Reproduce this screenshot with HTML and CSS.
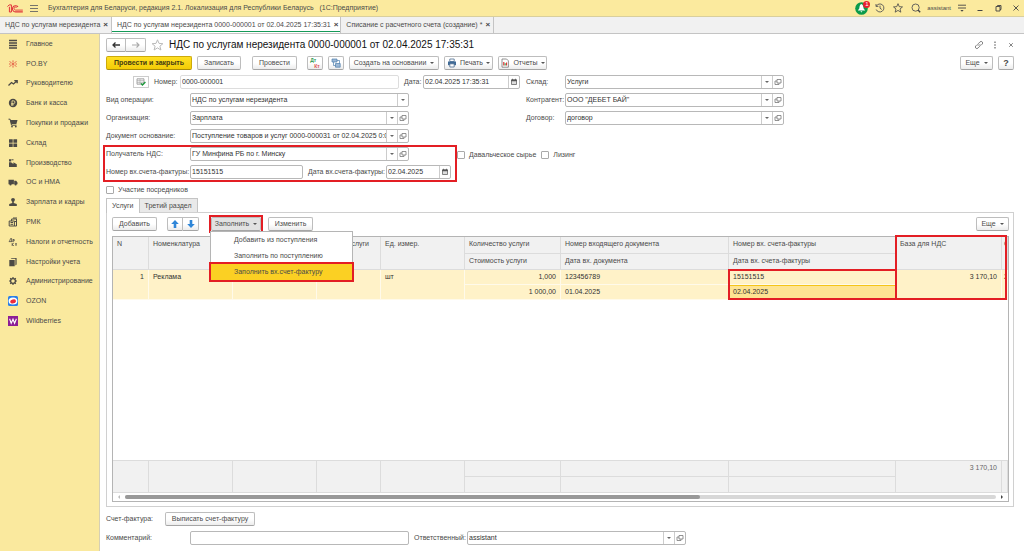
FILE: index.html
```html
<!DOCTYPE html>
<html lang="ru">
<head>
  <meta charset="UTF-8" />
  <meta name="viewport" content="width=device-width, initial-scale=1.0" />
  <title>НДС по услугам нерезидента</title>
  <link rel="stylesheet" href="styles.css">
</head>
<body>
  <svg class="sprite" aria-hidden="true">
    <symbol id="i-open" viewBox="0 0 8 8">
      <path d="M3 1.5h4v3.5h-4zM3 3H1v3.5h4V5" fill="none" stroke="#777" stroke-width="0.8"/>
    </symbol>
    <symbol id="i-cal" viewBox="0 0 8 8">
      <path d="M1.5 2h5v4.5h-5z" fill="#ddd" stroke="#666" stroke-width="0.8"/>
      <path d="M1.2 1.6h5.6v1.6H1.2zM2.2 0.8h0.8v1h-0.8zM5 0.8h0.8v1H5z" fill="#555"/>
    </symbol>
    <symbol id="i-star" viewBox="0 0 12 12">
      <path d="M6 0.8l1.5 3.6 3.9 0.3-3 2.5 1 3.8L6 8.9 2.6 11l1-3.8-3-2.5 3.9-0.3z" fill="none" stroke="currentColor"/>
    </symbol>
  </svg>

  <header class="titlebar">
    <svg class="logo" viewBox="0 0 16 9">
      <path d="M0.5 2.6L2.2 0.9H4.4V8H2.4V2.8" fill="none" stroke="#e0333a" stroke-width="1"/>
      <path d="M11 2.9A3.1 3.1 0 1 0 8.6 7.9H15.8" fill="none" stroke="#e0333a" stroke-width="1.1"/>
      <path d="M9.6 3.5A1.5 1.5 0 1 0 8.6 6.1H15.8" fill="none" stroke="#e0333a" stroke-width="0.9"/>
    </svg>
    <button class="icon-btn burger" aria-label="Меню">
      <svg viewBox="0 0 8 8"><path d="M0 1.5h8M0 4.5h8M0 7.5h8" stroke="#666" stroke-width="0.9"/></svg>
    </button>
    <span class="app-name">Бухгалтерия для Беларуси, редакция 2.1. Локализация для Республики Беларусь &nbsp; (1С:Предприятие)</span>
    <div class="title-tools">
      <button class="icon-btn bell" aria-label="Уведомления">
        <svg viewBox="0 0 14 14">
          <circle cx="6.5" cy="7.5" r="6.3" fill="#0c9b4a"/>
          <path d="M6.3 3C4.5 3.5 4.6 6 4.3 7.6L2.8 9.6h7.4L8.6 7.6C8.4 6 8.3 3.5 6.3 3zM5.4 10.3h2l-1 1.2z" fill="#fff"/>
        </svg>
        <span class="badge">1</span>
      </button>
      <button class="icon-btn" aria-label="История">
        <svg viewBox="0 0 10 10"><path d="M1.3 3.2A4 4 0 1 1 1.2 6.5M1 1v2.4h2.4M5 2.6v2.6l1.8 1.3" fill="none" stroke="#555" stroke-width="0.9"/></svg>
      </button>
      <button class="icon-btn" aria-label="Избранное"><svg viewBox="0 0 12 12"><use href="#i-star"/></svg></button>
      <button class="icon-btn" aria-label="Поиск">
        <svg viewBox="0 0 10 10"><circle cx="4.6" cy="4.6" r="3.6" fill="none" stroke="#555" stroke-width="0.9"/><path d="M7 7l2.2 2.2" stroke="#444" stroke-width="1.4"/></svg>
      </button>
      <span class="user">assistant</span>
      <button class="icon-btn" aria-label="Настройки">
        <svg viewBox="0 0 10 10"><path d="M1 2.2h8M1 5h8" stroke="#444" stroke-width="0.9"/><path d="M3.4 7h3.2L5 8.8z" fill="#444"/></svg>
      </button>
      <button class="icon-btn" aria-label="Свернуть"><svg viewBox="0 0 10 10"><path d="M2.5 7.5h5" stroke="#444"/></svg></button>
      <button class="icon-btn" aria-label="Развернуть"><svg viewBox="0 0 10 10"><path d="M3 3.5h4V8H3zM4.5 3.5V2.5h3.5v4H7" fill="none" stroke="#444" stroke-width="0.9"/></svg></button>
      <button class="icon-btn" aria-label="Закрыть"><svg viewBox="0 0 10 10"><path d="M2.5 2.5l5 5M7.5 2.5l-5 5" stroke="#444" stroke-width="0.9"/></svg></button>
    </div>
  </header>

  <nav class="tabs">
    <a href="#" class="tab">НДС по услугам нерезидента <b>×</b></a>
    <a href="#" class="tab active">НДС по услугам нерезидента 0000-000001 от 02.04.2025 17:35:31 <b>×</b></a>
    <a href="#" class="tab">Списание с расчетного счета (создание) * <b>×</b></a>
  </nav>

  <div class="layout">
    <nav class="sidebar">
      <div class="sections">
        <a href="#"><svg viewBox="0 0 10 10"><path d="M1 1.5h8M1 4h8M1 6.5h8M1 9h8" stroke="#4c4a45" stroke-width="1.3"/></svg>Главное</a>
        <a href="#"><svg viewBox="0 0 10 10"><path d="M5 3.6V1.4M5 6.4V8.6M3.8 4.4L1.6 2.2M6.2 4.4L8.4 2.2M3.8 5.6L1.6 7.8M6.2 5.6L8.4 7.8M1 5h1.6M7.4 5H9" fill="none" stroke="#e2503c" stroke-width="0.9"/><circle cx="5" cy="5" r="1" fill="#e2503c"/></svg>PO.BY</a>
        <a href="#"><svg viewBox="0 0 10 10"><path d="M0.5 7.5L3.5 4.5 5.5 6 9 2.8M6.3 2.6H9.2V5.2" fill="none" stroke="#4c4a45" stroke-width="1.3"/></svg>Руководителю</a>
        <a href="#"><svg viewBox="0 0 10 10"><circle cx="5" cy="5" r="4.2" fill="#4c4a45"/><path d="M4 8V2.8h1.5a1.4 1.4 0 0 1 0 2.8H3.2M3.2 6.8h2.6" fill="none" stroke="#fae99e" stroke-width="0.8"/></svg>Банк и касса</a>
        <a href="#"><svg viewBox="0 0 10 10"><path d="M0.5 1.2h1.6L3.5 7.2h5" fill="none" stroke="#4c4a45"/><path d="M2.2 2h7.3L8.4 6H3.2z" fill="#4c4a45"/><circle cx="4" cy="8.6" r="0.9" fill="#4c4a45"/><circle cx="7.8" cy="8.6" r="0.9" fill="#4c4a45"/></svg>Покупки и продажи</a>
        <a href="#"><svg viewBox="0 0 10 10"><path d="M1 1.2h3.7v3.5H1zM5.4 1.2h3.7v3.5H5.4zM1 5.4h3.7v3.5H1zM5.4 5.4h3.7v3.5H5.4z" fill="#4c4a45"/></svg>Склад</a>
        <a href="#"><svg viewBox="0 0 10 10"><path d="M1 9V4.2h2L5.4 6V4.3L8.8 6.2V9zM1 1.2h2.2v2.3H1z" fill="#4c4a45"/><path d="M3.5 1.8h2" stroke="#4c4a45"/></svg>Производство</a>
        <a href="#"><svg viewBox="0 0 10 10"><path d="M0.5 2.8h5.4v4.4H0.5zM6.2 3.8h2l1.3 1.6v1.8H6.2z" fill="#4c4a45"/><circle cx="2.5" cy="7.4" r="1.1" fill="#4c4a45"/><circle cx="7.6" cy="7.4" r="1.1" fill="#4c4a45"/></svg>ОС и НМА</a>
        <a href="#"><svg viewBox="0 0 10 10"><circle cx="5" cy="2.8" r="1.9" fill="#4c4a45"/><path d="M4.2 4h1.6v2l3 1V9H1.2V7l3-1z" fill="#4c4a45"/></svg>Зарплата и кадры</a>
        <a href="#"><svg viewBox="0 0 10 10"><path d="M1.2 4h5.2v5H1.2zM3.6 4V2h4.9v7H6.4" fill="none" stroke="#4c4a45"/><path d="M2.5 5.5h2.6M2.5 7.3h2.6M5 1h4M7 4.5h1" stroke="#4c4a45"/></svg>РМК</a>
        <a href="#"><svg viewBox="0 0 10 10"><path d="M0.8 4.6h3.6M1.5 4.4L2.6 1.5h1v3M5 2.2V5M5 2.5h1.2v1.4H5" fill="none" stroke="#4c4a45" stroke-width="0.8"/><path d="M4.2 6v3M5.8 6L4.4 7.4 5.8 9M7 6.8h2M8 6.8V9" fill="none" stroke="#4c4a45" stroke-width="0.8"/></svg>Налоги и отчетность</a>
        <a href="#"><svg viewBox="0 0 10 10"><path d="M1.3 3h5.4v6.2H1.3zM2.6 1.8L3.6 0.9h5v6.5L7.4 8.4V1.8z" fill="#4c4a45"/></svg>Настройки учета</a>
        <a href="#"><svg viewBox="0 0 10 10"><circle cx="5" cy="5" r="2.4" fill="none" stroke="#4c4a45" stroke-width="1.3"/><path d="M5 1v1.5M5 7.5V9M1 5h1.5M7.5 5H9M2.2 2.2l1 1M6.8 6.8l1 1M7.8 2.2l-1 1M3.2 6.8l-1 1" stroke="#4c4a45" stroke-width="1.2"/></svg>Администрирование</a>
        <a href="#"><svg viewBox="0 0 10 10"><rect width="10" height="10" rx="1.5" fill="#2a7fe8"/><ellipse cx="5" cy="5" rx="4.4" ry="3.6" fill="#fff"/><ellipse cx="5" cy="5.4" rx="2.9" ry="1.9" fill="#ee2a3c" transform="rotate(-15 5 5)"/></svg>OZON</a>
        <a href="#"><svg viewBox="0 0 10 10"><rect width="10" height="10" fill="#8c1d96"/><path d="M1.6 2.8l1.6 4.4L5 3.2l1.6 4L8.4 2.8" fill="none" stroke="#fff" stroke-width="1.1"/></svg>Wildberries</a>
      </div>
    </nav>

    <main class="main">
      <div class="heading">
        <div class="btn-group">
          <button class="btn" aria-label="Назад"><svg viewBox="0 0 10 8"><path d="M9 4H2M4.5 1.5L2 4l2.5 2.5" fill="none" stroke="#333" stroke-width="1.3"/></svg></button>
          <button class="btn" aria-label="Вперед"><svg viewBox="0 0 10 8"><path d="M1 4h7M5.5 1.5L8 4 5.5 6.5" fill="none" stroke="#aaa" stroke-width="1.1"/></svg></button>
        </div>
        <svg class="fav" viewBox="0 0 12 12"><use href="#i-star"/></svg>
        <h1>НДС по услугам нерезидента 0000-000001 от 02.04.2025 17:35:31</h1>
        <div class="heading-tools">
          <button class="icon-btn" aria-label="Ссылка"><svg viewBox="0 0 10 10"><path d="M4.2 5.8A1.6 1.6 0 0 1 4.2 3.8l1.8-1.9a1.5 1.5 0 0 1 2.2 2.2L7 5.3M5.8 4.2a1.6 1.6 0 0 1 0 2L4 8.1A1.5 1.5 0 0 1 1.8 5.9L3 4.7" fill="none" stroke="#777" stroke-width="0.9"/></svg></button>
          <button class="icon-btn" aria-label="Действия"><svg viewBox="0 0 10 10"><path d="M4.4 1.5h1.2V3H4.4zM4.4 4.3h1.2v1.5H4.4zM4.4 7h1.2v1.5H4.4z" fill="#666"/></svg></button>
          <button class="icon-btn" aria-label="Закрыть"><svg viewBox="0 0 10 10"><path d="M3.2 3.2l3.6 3.6M6.8 3.2L3.2 6.8" stroke="#777" stroke-width="0.9"/></svg></button>
        </div>
      </div>

      <div class="toolbar">
        <button class="btn primary">Провести и закрыть</button>
        <button class="btn save">Записать</button>
        <button class="btn post">Провести</button>
        <button class="btn square dtkt" aria-label="Дт Кт"><span class="dt">Дт</span><span class="kt">Кт</span></button>
        <button class="btn square" aria-label="Структура">
          <svg viewBox="0 0 10 10"><path d="M1 1h5v3H1zM4.5 5.5h4.7v3.7H4.5z" fill="#9db9d6" stroke="#4f7fae" stroke-width="0.7"/><path d="M6 2.5h2.5v3M2.5 4v3.5h2" fill="none" stroke="#4f7fae" stroke-width="0.7"/></svg>
        </button>
        <button class="btn create">Создать на основании <i class="caret"></i></button>
        <button class="btn print">
          <svg viewBox="0 0 10 10"><path d="M2.8 1h4.4v2.5H2.8z" fill="#fff" stroke="#4b6c8f" stroke-width="0.8"/><path d="M1 3.5h8v3.7H1z" fill="#3f6a96"/><path d="M2.8 5.8h4.4V9H2.8z" fill="#fff" stroke="#4b6c8f" stroke-width="0.8"/></svg>
          Печать <i class="caret"></i></button>
        <button class="btn report">
          <svg viewBox="0 0 10 10"><path d="M2 1h4.6L8.4 2.8V9.2H2z" fill="#fff" stroke="#777" stroke-width="0.8"/><path d="M3.2 4h1.2v3.5H3.2z" fill="#d33"/><path d="M4.6 5.2h1.1v2.3H4.6z" fill="#2a9a4a"/><path d="M6 4.4h1.1v3.1H6z" fill="#d33"/></svg>
          Отчеты <i class="caret"></i></button>
        <button class="btn more">Еще <i class="caret"></i></button>
        <button class="btn square help">?</button>
      </div>

      <form class="form">
        <div class="row">
          <div class="left number-row">
            <button type="button" class="status" aria-label="Проведен">
              <svg viewBox="0 0 10 8"><path d="M1 0.8h7v5.4H1z" fill="#f4f4f4" stroke="#888" stroke-width="0.7"/><path d="M1 2.6h7M1 4.4h7M4 1v5" stroke="#999" stroke-width="0.5"/><path d="M5 5.4l1.4 1.6L9.4 4" fill="none" stroke="#1f9a3e" stroke-width="1.4"/></svg>
            </button>
            <label class="num-label" for="num">Номер:</label>
            <span class="field pale wide"><input id="num" value="0000-000001"></span>
            <label class="date-label" for="date">Дата:</label>
            <span class="field date"><input id="date" value="02.04.2025 17:35:31"><button type="button" aria-label="Календарь"><svg viewBox="0 0 8 8"><use href="#i-cal"/></svg></button></span>
          </div>
          <label class="short" for="store">Склад:</label>
          <span class="field wide"><select id="store"><option>Услуги</option></select><i class="drop"></i><button type="button" aria-label="Открыть"><svg viewBox="0 0 8 8"><use href="#i-open"/></svg></button></span>
        </div>
        <div class="row">
          <div class="left">
            <label class="long" for="kind">Вид операции:</label>
            <span class="field wide"><select id="kind"><option>НДС по услугам нерезидента</option></select><i class="drop"></i></span>
          </div>
          <label class="short" for="partner">Контрагент:</label>
          <span class="field wide"><select id="partner"><option>ООО "ДЕБЕТ БАЙ"</option></select><i class="drop"></i><button type="button" aria-label="Открыть"><svg viewBox="0 0 8 8"><use href="#i-open"/></svg></button></span>
        </div>
        <div class="row">
          <div class="left">
            <label class="long" for="org">Организация:</label>
            <span class="field wide"><select id="org"><option>Зарплата</option></select><i class="drop"></i><button type="button" aria-label="Открыть"><svg viewBox="0 0 8 8"><use href="#i-open"/></svg></button></span>
          </div>
          <label class="short" for="contract">Договор:</label>
          <span class="field wide"><select id="contract"><option>договор</option></select><i class="drop"></i><button type="button" aria-label="Открыть"><svg viewBox="0 0 8 8"><use href="#i-open"/></svg></button></span>
        </div>
        <div class="row">
          <label class="long" for="base">Документ основание:</label>
          <span class="field wide"><select id="base"><option>Поступление товаров и услуг 0000-000031 от 02.04.2025 0:00:00</option></select><i class="drop"></i><button type="button" aria-label="Открыть"><svg viewBox="0 0 8 8"><use href="#i-open"/></svg></button></span>
        </div>
        <div class="vat-rows">
          <div class="marked">
            <div class="row">
              <label class="long" for="recipient">Получатель НДС:</label>
              <span class="field wide"><select id="recipient"><option>ГУ Минфина РБ по г. Минску</option></select><i class="drop"></i><button type="button" aria-label="Открыть"><svg viewBox="0 0 8 8"><use href="#i-open"/></svg></button></span>
            </div>
            <div class="row">
              <label class="long" for="innum">Номер вх.счета-фактуры:</label>
              <span class="field invoice-num"><input id="innum" value="15151515"></span>
              <label class="invoice-label" for="indate">Дата вх.счета-фактуры:</label>
              <span class="field invoice-date"><input id="indate" value="02.04.2025"><button type="button" aria-label="Календарь"><svg viewBox="0 0 8 8"><use href="#i-cal"/></svg></button></span>
            </div>
          </div>
          <label class="check"><input type="checkbox">Давальческое сырье</label>
          <label class="check"><input type="checkbox">Лизинг</label>
        </div>
        <label class="check"><input type="checkbox">Участие посредников</label>
      </form>

      <div class="page-tabs">
        <button class="page-tab current">Услуги</button>
        <button class="page-tab">Третий раздел</button>
      </div>
      <section class="panel">
        <div class="toolbar">
          <button class="btn add">Добавить</button>
          <div class="btn-group arrows">
            <button class="btn" aria-label="Вверх"><svg viewBox="0 0 10 10"><path d="M5 1l3.8 4H6.3v4H3.7V5H1.2z" fill="#2f86d8"/></svg></button>
            <button class="btn" aria-label="Вниз"><svg viewBox="0 0 10 10"><path d="M5 9l3.8-4H6.3V1H3.7v4H1.2z" fill="#2f86d8"/></svg></button>
          </div>
          <div class="fill">
            <button class="btn pressed">Заполнить <i class="caret"></i></button>
            <div class="menu">
              <button>Добавить из поступления</button>
              <button>Заполнить по поступлению</button>
              <button class="chosen">Заполнить вх.счет-фактуру</button>
            </div>
          </div>
          <button class="btn change">Изменить</button>
          <button class="btn more">Еще <i class="caret"></i></button>
        </div>

        <div class="grid">
          <table>
            <colgroup><col class="c-n"><col class="c-name"><col class="c-name"><col class="c-sum"><col class="c-unit"><col class="c-qty"><col><col class="c-inv"><col class="c-vat"><col class="c-tail"></colgroup>
            <thead>
              <tr><th rowspan="2">N</th><th rowspan="2">Номенклатура</th><th rowspan="2"></th><th rowspan="2" class="right">услуги</th><th rowspan="2">Ед. измер.</th><th>Количество услуги</th><th>Номер входящего документа</th><th>Номер вх. счета-фактуры</th><th rowspan="2">База для НДС</th><th rowspan="2" class="tail">С</th></tr>
              <tr><th>Стоимость услуги</th><th>Дата вх. документа</th><th>Дата вх. счета-фактуры</th></tr>
            </thead>
            <tbody>
              <tr><td rowspan="2" class="num">1</td><td rowspan="2">Реклама</td><td rowspan="2"></td><td rowspan="2"></td><td rowspan="2">шт</td><td class="num">1,000</td><td>123456789</td><td>15151515</td><td rowspan="2" class="num">3 170,10</td><td rowspan="2" class="tail">2</td></tr>
              <tr><td class="num">1 000,00</td><td>01.04.2025</td><td class="cell-active">02.04.2025</td></tr>
            </tbody>
          </table>
          <table class="totals">
            <colgroup><col class="c-n"><col class="c-name"><col class="c-name"><col class="c-sum"><col class="c-unit"><col class="c-qty"><col><col class="c-inv"><col class="c-vat"><col class="c-tail"></colgroup>
            <tbody>
              <tr><td rowspan="2"></td><td rowspan="2"></td><td rowspan="2"></td><td rowspan="2"></td><td rowspan="2"></td><td></td><td></td><td></td><td rowspan="2" class="num">3 170,10</td><td rowspan="2"></td></tr>
              <tr><td></td><td></td><td></td></tr>
            </tbody>
          </table>
          <div class="scroll">
            <i class="to-left"></i>
            <div class="track"><div class="thumb"></div></div>
            <i class="to-right"></i>
          </div>
          <div class="mark mark-invoice"></div>
          <div class="mark mark-vat"></div>
        </div>
      </section>

      <div class="bottom">
        <div class="row">
          <span class="bill-label">Счет-фактура:</span>
          <button class="btn bill">Выписать счет-фактуру</button>
        </div>
        <div class="row">
          <label class="long" for="comment">Комментарий:</label>
          <span class="field wide"><input id="comment"></span>
          <label class="owner-label" for="owner">Ответственный:</label>
          <span class="field wide"><select id="owner"><option>assistant</option></select><i class="drop"></i><button type="button" aria-label="Открыть"><svg viewBox="0 0 8 8"><use href="#i-open"/></svg></button></span>
        </div>
      </div>
    </main>
  </div>
</body>
</html>
```
FILE: styles.css
```css
* {
  box-sizing: border-box;
}
body {
  margin: 0;
  min-height: 100vh;
  display: flex;
  flex-direction: column;
  font-family: "Liberation Sans", Arial, sans-serif;
  font-size: 7px;
  line-height: 10px;
  color: #4a4a4a;
  background: #fff;
}
button, input, select {
  font: inherit;
  color: inherit;
  margin: 0;
  padding: 0;
  border: none;
  background: none;
}
a {
  color: inherit;
  text-decoration: none;
}
svg {
  display: block;
  flex: none;
}
.sprite {
  position: absolute;
  width: 0;
  height: 0;
}

/* window title */
.titlebar {
  display: flex;
  align-items: center;
  height: 17px;
  padding: 0 3px 0 7px;
  background: #fbea9e;
  border-bottom: 1px solid #d9cf9d;
}
.logo {
  width: 16px;
  height: 9px;
}
.icon-btn {
  width: 18px;
  height: 14px;
  display: flex;
  align-items: center;
  justify-content: center;
}
.icon-btn svg {
  width: 10px;
  height: 10px;
}
.burger {
  width: 8px;
  margin: 0 10px 0 7px;
}
.burger svg {
  width: 8px;
  height: 8px;
}
.title-tools {
  display: flex;
  align-items: center;
  margin-left: auto;
  margin-right: -4px;
}
.bell {
  position: relative;
}
.bell svg {
  width: 14px;
  height: 14px;
}
.badge {
  position: absolute;
  top: 0;
  right: 1px;
  width: 7px;
  height: 7px;
  border-radius: 50%;
  background: #e8202e;
  color: #fff;
  font-size: 6px;
  line-height: 7px;
}
.user {
  font-size: 6px;
  margin: 0 2px;
}

.tabs {
  display: flex;
  height: 17px;
  background: #f1f1f1;
  border-bottom: 1px solid #c4c4c4;
}
.tab {
  display: flex;
  align-items: center;
  gap: 3px;
  padding: 0 3px 0 5px;
  border-right: 1px solid #c4c4c4;
}
.tab b {
  font-size: 8px;
  color: #444;
}
.tab.active {
  padding-right: 2px;
  background: #fff;
  box-shadow: inset 0 -1px #fff, inset 0 -2px #159a58;
}

.layout {
  flex: 1;
  display: flex;
}
.sidebar {
  width: 100px;
  flex: none;
  background: #fae99e;
  border-right: 1px solid #d5cfb4;
}
.sections {
  display: flex;
  flex-direction: column;
  min-height: 297px;
}
.sidebar a {
  flex: 1;
  display: flex;
  align-items: center;
  gap: 8px;
  padding-left: 8px;
  white-space: nowrap;
}
.sidebar svg {
  width: 10px;
  height: 10px;
}

.main {
  flex: 1;
  min-width: 0;
  padding: 0 10px 6px 6px;
  display: flex;
  flex-direction: column;
}
.heading {
  display: flex;
  align-items: center;
  height: 21px;
}
.heading h1 {
  margin: 0 0 0 5px;
  font-size: 10px;
  line-height: 14px;
  font-weight: normal;
  color: #111;
}
.fav {
  width: 13px;
  height: 12px;
  margin-left: 5px;
  color: #bbb;
}
.heading-tools {
  display: flex;
  gap: 0;
  margin-left: auto;
  margin-right: -5px;
}
.heading-tools .icon-btn {
  width: 16px;
}

/* buttons */
.btn {
  display: flex;
  align-items: center;
  justify-content: center;
  gap: 4px;
  height: 14px;
  border: 1px solid #bdbdbd;
  border-bottom-color: #a5a5a5;
  border-radius: 2px;
  background: linear-gradient(#fff 50%, #ececec);
  white-space: nowrap;
}
.btn svg {
  width: 10px;
  height: 10px;
}
.btn-group {
  display: flex;
}
.btn-group .btn {
  width: 20px;
  border-radius: 2px 0 0 2px;
}
.btn-group .btn + .btn {
  border-left: none;
  border-radius: 0 2px 2px 0;
}
.caret {
  border: 2px solid transparent;
  border-top-color: #555;
  border-bottom: none;
}
.toolbar {
  display: flex;
  gap: 5px;
  height: 14px;
  margin-top: 1px;
}
.primary {
  width: 86px;
  font-weight: bold;
  color: #453c12;
  border-color: #cdaa0a;
  border-bottom-color: #a98c08;
  background: linear-gradient(#ffe023, #f3cc06);
}
.save {
  width: 44px;
}
.post {
  width: 45px;
  margin: 0 5px 0 6px;
}
.square {
  width: 16px;
}
.dtkt {
  display: grid;
  gap: 0;
  font-size: 5px;
  line-height: 5px;
  font-weight: bold;
}
.dt {
  color: #2f9a55;
  text-align: left;
}
.kt {
  color: #e05252;
  padding-left: 4px;
}
.create {
  width: 90px;
}
.print, .report {
  width: 49px;
  gap: 3px;
}
.more {
  width: 33px;
  margin-left: auto;
}
.help {
  font-size: 9px;
  font-weight: bold;
}

/* document fields */
.form {
  display: flex;
  flex-direction: column;
  align-items: flex-start;
  gap: 4px;
  margin-top: 5px;
}
.row {
  display: flex;
  align-items: center;
  height: 14px;
  white-space: nowrap;
}
.left {
  display: flex;
  align-items: center;
  width: 414px;
  margin-right: 6px;
}
.number-row {
  padding-left: 27px;
}
.long {
  width: 84px;
}
.short {
  width: 39px;
}
.num-label {
  width: 31px;
  padding-left: 5px;
}
.date-label {
  width: 24px;
  padding-left: 5px;
}
.status {
  width: 16px;
  height: 12px;
  display: flex;
  align-items: center;
  justify-content: center;
  border: 1px solid #ccc;
}
.status svg {
  width: 10px;
  height: 8px;
}
.field {
  display: flex;
  height: 14px;
  border: 1px solid #b8b8b8;
  border-radius: 2px;
  background: #fff;
  overflow: hidden;
}
.field input, .field select {
  flex: 1;
  min-width: 0;
  padding-left: 1px;
  appearance: none;
  outline: none;
  color: #333;
}
.field button, .drop {
  width: 11px;
  flex: none;
  display: flex;
  align-items: center;
  justify-content: center;
  border-left: 1px solid #ccc;
}
.drop::before {
  content: "";
  border: 2px solid transparent;
  border-top-color: #666;
  border-bottom: none;
}
.field svg {
  width: 8px;
  height: 8px;
}
.wide {
  width: 219px;
}
.pale {
  border-color: #ddd;
}
.date {
  width: 97px;
}
.vat-rows {
  display: flex;
  align-items: flex-start;
  margin: -2px 0 -2px -3px;
}
.marked {
  display: flex;
  flex-direction: column;
  gap: 4px;
  width: 354px;
  padding: 0 0 1px 1px;
  border: 2px solid #e31e24;
}
.invoice-num {
  width: 113px;
}
.invoice-label {
  width: 83px;
  padding-left: 5px;
}
.invoice-date {
  width: 65px;
}
.check {
  display: flex;
  align-items: center;
  gap: 4px;
  height: 11px;
}
.vat-rows .check {
  margin: 4px 5px 0 0;
}
.check input {
  appearance: none;
  width: 8px;
  height: 8px;
  border: 1px solid #aaa;
  border-radius: 1px;
  background: #fff;
}

/* pages */
.page-tabs {
  display: flex;
  margin-top: 3px;
}
.page-tab {
  height: 14px;
  padding: 0 5px;
  border: 1px solid #c4c4c4;
  border-bottom: none;
  background: #e9e9e9;
}
.page-tab + .page-tab {
  border-left: none;
}
.page-tab.current {
  height: 15px;
  margin-bottom: -1px;
  background: #fff;
  z-index: 1;
}
.panel {
  flex: 1;
  display: flex;
  flex-direction: column;
  padding: 4px 4px 4px 5px;
  border: 1px solid #d0d0d0;
}
.panel .toolbar {
  margin: 0;
}
.add {
  width: 45px;
}
.arrows {
  margin: 0 7px 0 5px;
}
.arrows .btn {
  width: 16px;
}
.fill {
  position: relative;
  margin-right: 2px;
  outline: 2px solid #e31e24;
}
.pressed {
  width: 50px;
  background: #e2e2e2;
}
.change {
  width: 45px;
}
.menu {
  position: absolute;
  top: 14px;
  left: -1px;
  z-index: 3;
  width: 143px;
  border: 1px solid #b5b5b5;
  background: #fff;
}
.menu button {
  display: block;
  width: 100%;
  height: 16px;
  padding-left: 23px;
  text-align: left;
}
.menu .chosen {
  background: #fbd023;
  outline: 2px solid #e31e24;
}

.grid {
  position: relative;
  flex: 1;
  display: flex;
  flex-direction: column;
  margin-top: 5px;
  border: 1px solid #b4b4b4;
}
table {
  width: 100%;
  table-layout: fixed;
  border-collapse: separate;
  border-spacing: 0;
}
.c-n { width: 36px; }
.c-name { width: 84px; }
.c-sum { width: 64px; }
.c-unit { width: 84px; }
.c-qty { width: 96px; }
.c-inv { width: 167px; }
.c-vat { width: 106px; }
.c-tail { width: 6px; }
th, td {
  padding: 2px 4px 0;
  vertical-align: top;
  text-align: left;
  font-weight: normal;
  white-space: nowrap;
  overflow: hidden;
}
th {
  height: 17px;
  background: #f1f1f1;
  border-right: 1px solid #dcdcdc;
  border-bottom: 1px solid #dcdcdc;
}
tr + tr th {
  height: 16px;
}
tbody td {
  height: 15px;
  background: #fff2c8;
  color: #333;
  border-right: 1px solid #fffaea;
  border-bottom: 1px solid #fffaea;
}
.right, .num {
  text-align: right;
}
.right {
  padding-right: 11px;
}
td.cell-active {
  background: #fee492;
  border-top: 1px solid #f5c518;
  padding-top: 1px;
}
.tail {
  padding-left: 2px;
  padding-right: 0;
}
.totals {
  margin-top: auto;
  border-top: 1px solid #dcdcdc;
}
.totals td {
  height: 16px;
  background: #f1f1f1;
  border-color: #dcdcdc;
  color: #666;
}
.scroll {
  display: flex;
  align-items: center;
  gap: 5px;
  height: 8px;
  padding: 0 5px;
}
.track {
  flex: 1;
  height: 4px;
  border-radius: 2px;
  background: #d8d8d8;
}
.thumb {
  width: 66%;
  height: 4px;
  border-radius: 2px;
  background: #999;
}
.to-left, .to-right {
  border: 2px solid transparent;
}
.to-left {
  border-right-color: #bbb;
  border-left: none;
}
.to-right {
  border-left-color: #444;
  border-right: none;
}
.mark {
  position: absolute;
  border: 2px solid #e31e24;
}
.mark-invoice {
  top: 32px;
  right: 111px;
  width: 169px;
  height: 31px;
}
.mark-vat {
  top: -2px;
  right: 1px;
  width: 112px;
  height: 65px;
}

.bottom {
  display: flex;
  flex-direction: column;
  gap: 5px;
  margin-top: 5px;
}
.bill-label {
  width: 59px;
}
.bill {
  width: 90px;
}
.owner-label {
  width: 58px;
  padding-left: 5px;
}
```
